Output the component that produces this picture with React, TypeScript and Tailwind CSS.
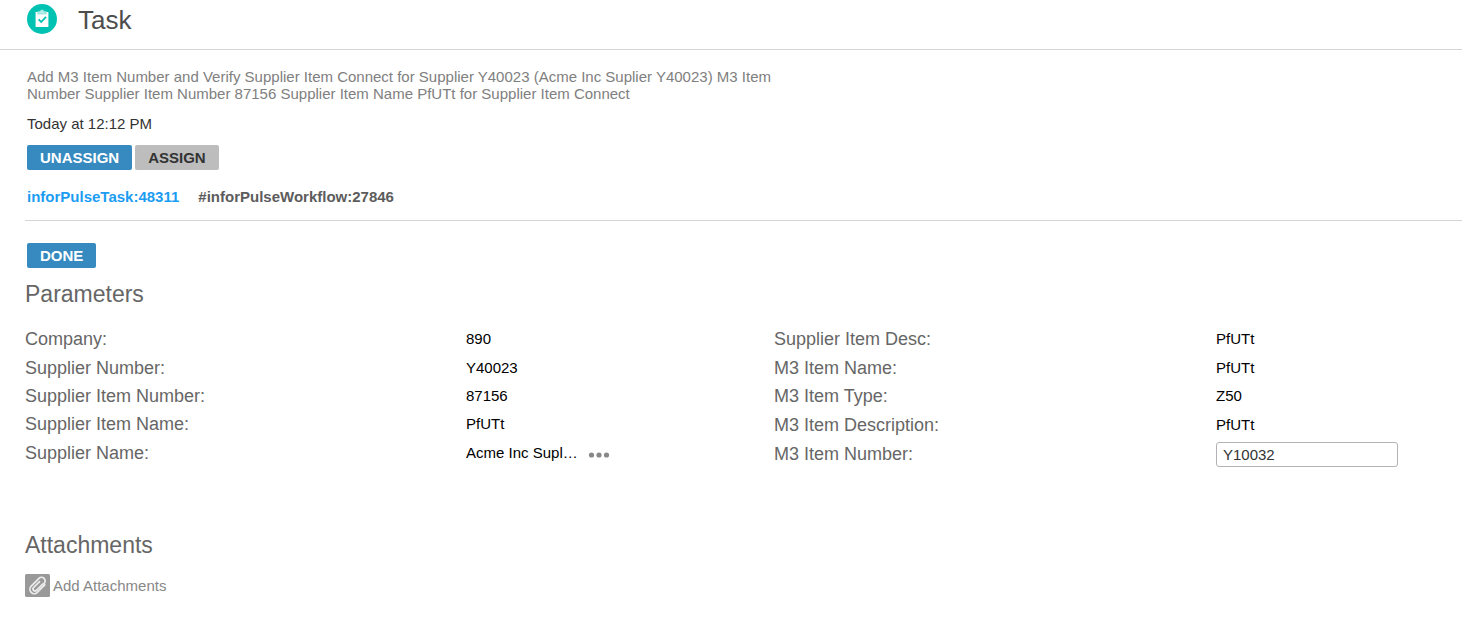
import { useState } from "react";

type Parameter = { label: string; value: string; more?: boolean };

const leftParameters: Parameter[] = [
  { label: "Company:", value: "890" },
  { label: "Supplier Number:", value: "Y40023" },
  { label: "Supplier Item Number:", value: "87156" },
  { label: "Supplier Item Name:", value: "PfUTt" },
  { label: "Supplier Name:", value: "Acme Inc Supl…", more: true },
];

const rightParameters: Parameter[] = [
  { label: "Supplier Item Desc:", value: "PfUTt" },
  { label: "M3 Item Name:", value: "PfUTt" },
  { label: "M3 Item Type:", value: "Z50" },
  { label: "M3 Item Description:", value: "PfUTt" },
];

function TaskIcon() {
  return (
    <svg viewBox="0 0 30 30" className="size-[30px] shrink-0" aria-hidden="true">
      <circle cx="15" cy="15" r="15" fill="#00c2b2" />
      <rect x="8.6" y="8" width="12.8" height="15" rx="0.6" fill="#fff" />
      <path
        d="M10.8 10V7.2h2.1a2.2 2.2 0 0 1 4.2 0h2.1V10z"
        fill="#b5ece7"
        stroke="#5fd8cd"
        strokeWidth="0.5"
      />
      <path d="m11.6 15.4 2.6 2.6 4.8-5.2" fill="none" stroke="#00c2b2" strokeWidth="1.8" />
    </svg>
  );
}

function ClipIcon() {
  return (
    <svg viewBox="0 0 25 23" className="h-[23px] w-[25px] shrink-0" aria-hidden="true">
      <rect width="25" height="23" rx="1.5" fill="#999" />
      <g
        transform="rotate(45 12.5 12)"
        fill="none"
        stroke="#ececec"
        strokeWidth="1.7"
        strokeLinecap="round"
      >
        <path d="M16.8 6.2v10.4a4.3 4.3 0 0 1-8.6 0V5.6a3.6 3.6 0 0 1 7.2 0v0M14.8 7v8.8a2 2 0 0 1-4 0V7.4" />
        <path d="M15.4 5.6q1.4 0 1.4 1.6" />
      </g>
    </svg>
  );
}

function ParameterRow({ label, value, more }: Parameter) {
  return (
    <>
      <dt className="text-lg leading-7 text-[#666]">{label}</dt>
      <dd className="flex items-center text-[15px] leading-7 text-black">
        {value}
        {more && (
          <button type="button" aria-label="Show full supplier name" className="ml-2.5 pt-1">
            <svg viewBox="0 0 22 6" className="h-1.5 w-[22px]" fill="#888" aria-hidden="true">
              <circle cx="3.5" cy="3" r="2.6" />
              <circle cx="11" cy="3" r="2.6" />
              <circle cx="18.5" cy="3" r="2.6" />
            </svg>
          </button>
        )}
      </dd>
    </>
  );
}

export default function App() {
  const [itemNumber, setItemNumber] = useState("Y10032");

  return (
    <div className="min-h-screen bg-white font-['Liberation_Sans',Arial,sans-serif] text-[15px]">
      <header className="flex h-[50px] items-start gap-[21px] border-b border-[#d4d4d4] pt-1 pl-[27px]">
        <TaskIcon />
        <h1 className="text-[26px] leading-8 text-[#4d4d4d]">Task</h1>
      </header>

      <main className="pl-[25px]">
        <section className="border-b border-[#d4d4d4] pt-[18px] pb-[13px] pl-0.5">
          <p className="max-w-[750px] leading-[17px] text-[#808080]">
            Add M3 Item Number and Verify Supplier Item Connect for Supplier Y40023 (Acme Inc Suplier
            Y40023) M3 Item Number Supplier Item Number 87156 Supplier Item Name PfUTt for Supplier
            Item Connect
          </p>
          <p className="mt-3 leading-5 text-[#333]">Today at 12:12 PM</p>
          <div className="mt-[11px] flex gap-[3px] font-bold">
            <button
              type="button"
              className="h-[25px] rounded-xs bg-[#368ac0] px-[13px] pt-0.5 text-white"
            >
              UNASSIGN
            </button>
            <button
              type="button"
              className="h-[25px] rounded-xs bg-[#bdbdbd] px-[13px] pt-0.5 text-[#333]"
            >
              ASSIGN
            </button>
          </div>
          <div className="mt-[17px] flex gap-[19px] leading-5 font-bold">
            <a href="#task" className="text-[#1c9df2]">
              inforPulseTask:48311
            </a>
            <span className="text-[#5c5c5c]">#inforPulseWorkflow:27846</span>
          </div>
        </section>

        <section className="pt-[22px]">
          <button
            type="button"
            className="ml-0.5 block h-[25px] rounded-xs bg-[#368ac0] px-[13px] pt-0.5 font-bold text-white"
          >
            DONE
          </button>
          <h2 className="mt-3 text-[23px] leading-7 text-[#666]">Parameters</h2>
          <div className="mt-[17px] grid grid-cols-[749fr_688fr] items-start">
            <dl className="grid min-h-[142px] auto-rows-fr grid-cols-[441fr_308fr] items-center">
              {leftParameters.map((p) => (
                <ParameterRow key={p.label} {...p} />
              ))}
            </dl>
            <dl className="grid min-h-[143px] auto-rows-fr grid-cols-[442fr_246fr] items-center">
              {rightParameters.map((p) => (
                <ParameterRow key={p.label} {...p} />
              ))}
              <dt className="text-lg leading-7 text-[#666]">
                <label htmlFor="item-number">M3 Item Number:</label>
              </dt>
              <dd className="flex pt-px">
                <input
                  id="item-number"
                  type="text"
                  value={itemNumber}
                  onChange={(e) => setItemNumber(e.target.value)}
                  className="h-[25px] w-[182px] rounded-[3px] border border-[#b3b3b3] px-1.5 text-[#333]"
                />
              </dd>
            </dl>
          </div>
        </section>

        <section className="pt-[63px] pb-6">
          <h2 className="text-[23px] leading-7 text-[#666]">Attachments</h2>
          <button type="button" className="mt-3.5 flex items-center gap-[3px] text-[#888]">
            <ClipIcon />
            <span className="pt-0.5">Add Attachments</span>
          </button>
        </section>
      </main>
    </div>
  );
}
